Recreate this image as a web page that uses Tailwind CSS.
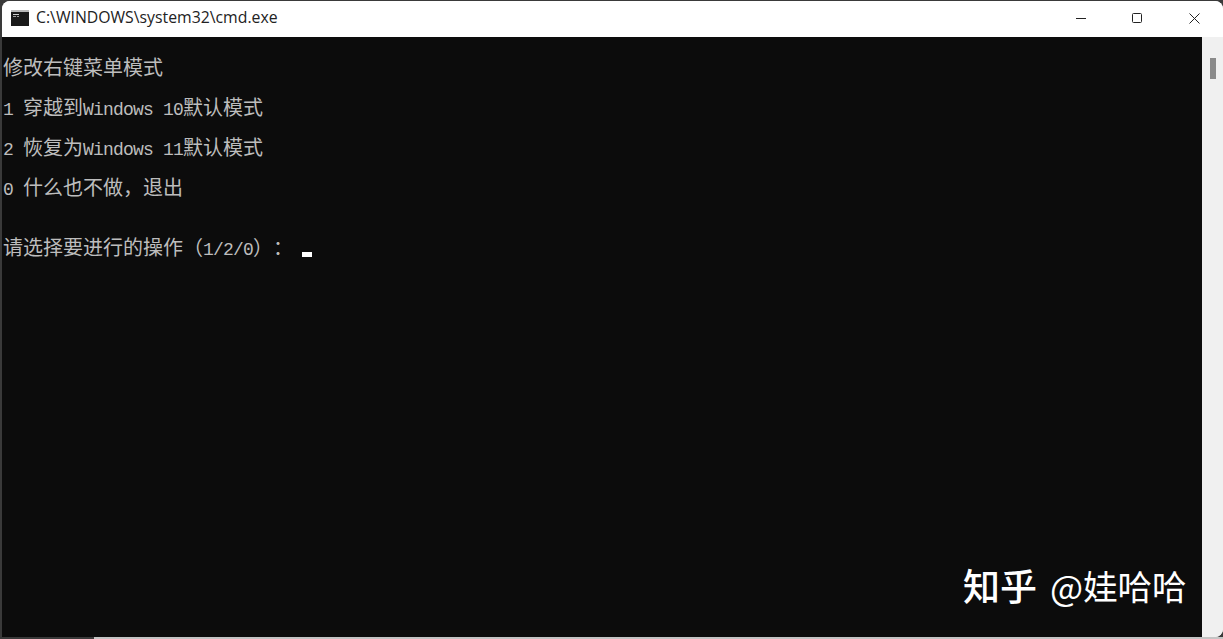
<!DOCTYPE html>
<html lang="zh-CN">
<head>
  <meta charset="UTF-8">
  <title>cmd.exe</title>
  <script src="https://cdn.jsdelivr.net/npm/@tailwindcss/browser@4"></script>
</head>
<body class="bg-[#3a3a3a] overflow-hidden">
  <div class="flex flex-col w-[1223px] h-[639px] pt-px pl-[2px]">
    <div class="relative flex flex-col flex-1 min-h-0 bg-white rounded-t-lg rounded-br-lg overflow-hidden">
      <!-- title bar -->
      <div class="flex items-center h-9 shrink-0 bg-white pl-[9px] pb-[2px]">
        <svg width="18" height="16" viewBox="0 0 18 16" class="mr-[7px]">
          <rect width="18" height="16" fill="#1a1a1a"/>
          <rect width="18" height="2" fill="#b8b8b8"/>
          <rect x="2" y="4" width="6" height="1" fill="#d0d0d0"/>
          <rect x="2" y="6" width="3" height="1" fill="#a0a0a0"/>
          <rect x="6" y="6" width="2" height="1" fill="#a0a0a0"/>
        </svg>
        <span class="font-['Open_Sans'] text-[15.8px] text-[#222]">C:\WINDOWS\system32\cmd.exe</span>
        <div class="ml-auto flex items-center">
          <div class="w-[56px] flex items-center justify-center">
            <svg width="10" height="10" viewBox="0 0 10 10"><path d="M0 5.5H10" stroke="#222" fill="none"/></svg>
          </div>
          <div class="w-[56px] flex items-center justify-center">
            <svg width="10" height="10" viewBox="0 0 10 10"><rect x="0.5" y="0.5" width="9" height="9" rx="1" stroke="#222" fill="none"/></svg>
          </div>
          <div class="w-[58px] flex items-center justify-center">
            <svg width="11" height="11" viewBox="0 0 11 11"><path d="M0.5 0.5L10.5 10.5M10.5 0.5L0.5 10.5" stroke="#222" fill="none"/></svg>
          </div>
        </div>
      </div>
      <!-- console -->
      <div class="flex flex-1 min-h-0">
        <div class="flex-1 bg-[#0c0c0c] pl-px pt-5 flex flex-col gap-5 text-[#bdbdbd] text-[20px] font-['Noto_Sans_CJK_SC',sans-serif] whitespace-pre [text-spacing-trim:space-all]">
          <div class="h-5 leading-5">修改右键菜单模式</div>
          <div class="h-5 leading-5"><span class="font-['Liberation_Mono'] text-[18px] leading-[0] tracking-[-0.8px]">1 </span>穿越到<span class="font-['Liberation_Mono'] text-[18px] leading-[0] tracking-[-0.8px]">Windows 10</span>默认模式</div>
          <div class="h-5 leading-5"><span class="font-['Liberation_Mono'] text-[18px] leading-[0] tracking-[-0.8px]">2 </span>恢复为<span class="font-['Liberation_Mono'] text-[18px] leading-[0] tracking-[-0.8px]">Windows 11</span>默认模式</div>
          <div class="h-5 leading-5"><span class="font-['Liberation_Mono'] text-[18px] leading-[0] tracking-[-0.8px]">0 </span>什么也不做，退出</div>
          <div class="h-5 leading-5 mt-5">请选择要进行的操作（<span class="font-['Liberation_Mono'] text-[18px] leading-[0] tracking-[-0.8px]">1/2/0</span>）：<span class="inline-block w-[10px] h-[5px] ml-[9px] bg-white translate-y-[2px]"></span></div>
        </div>
        <div class="w-[21px] bg-[#f0f0f0] pt-[21px] pl-[8px] shrink-0">
          <div class="w-[6px] h-[21px] bg-[#8a8a8a]"></div>
        </div>
      </div>
      <!-- watermark -->
      <div class="absolute left-[961px] top-[562px] flex items-center h-[46px] text-white whitespace-pre font-['Noto_Sans_CJK_SC',sans-serif]">
        <span class="text-[37px] font-medium">知乎</span><span class="w-[13px]"></span><span class="text-[35px]">@</span><span class="text-[34.5px]">娃哈哈</span>
      </div>
    </div>
    <div class="h-[2px] shrink-0 ml-[92px] bg-[#c4c4c4]"></div>
  </div>
</body>
</html>
